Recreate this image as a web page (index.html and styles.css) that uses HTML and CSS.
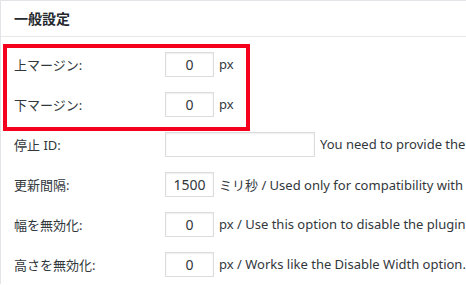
FILE: index.html
```html
<!DOCTYPE html>
<html lang="ja">
<head>
    <meta charset="UTF-8">
    <meta name="viewport" content="width=device-width, initial-scale=1.0">
    <title>一般設定</title>
    <link rel="stylesheet" href="styles.css">
</head>
<body>

    <div class="postbox">
        <h3 class="hndle">一般設定</h3>

        <div class="inside">
            <div class="highlight">
                <div class="row">
                    <label for="mtop">上マージン:</label>
                    <input type="text" id="mtop" class="small" value="0">
                    <span class="desc">px</span>
                </div>
                <div class="row">
                    <label for="mbottom">下マージン:</label>
                    <input type="text" id="mbottom" class="small" value="0">
                    <span class="desc">px</span>
                </div>
            </div>

            <div class="row">
                <label for="stopid">停止 ID:</label>
                <input type="text" id="stopid" class="wide" value="">
                <span class="desc">You need to provide the ID of the element</span>
            </div>
            <div class="row">
                <label for="interval">更新間隔:</label>
                <input type="text" id="interval" class="small" value="1500">
                <span class="desc">ミリ秒 / Used only for compatibility with Internet Explorer</span>
            </div>
            <div class="row">
                <label for="dwidth">幅を無効化:</label>
                <input type="text" id="dwidth" class="small" value="0">
                <span class="desc">px / Use this option to disable the plugin on small screens</span>
            </div>
            <div class="row">
                <label for="dheight">高さを無効化:</label>
                <input type="text" id="dheight" class="small" value="0">
                <span class="desc">px / Works like the Disable Width option.</span>
            </div>
        </div>
    </div>

</body>
</html>
```

FILE: styles.css
```css
* {
    margin: 0;
    padding: 0;
    box-sizing: border-box;
}
body {
    font-family: "Noto Sans", "Noto Sans CJK JP", sans-serif;
    font-size: 13px;
    color: #32373c;
    background-color: #fff;
    overflow: hidden;
}
.postbox {
    width: 700px;
    border-top: 1px solid #e2e4e7;
    border-left: 1px solid #e2e4e7;
    background-color: #fff;
}
.hndle {
    height: 36px;
    line-height: 35px;
    padding: 0 13px;
    font-size: 14px;
    font-weight: bold;
    color: #23282d;
    border-bottom: 1px solid #e8e8e8;
}
.inside {
    padding-top: 7px;
}
.highlight {
    position: relative;
}
.highlight::after {
    content: "";
    position: absolute;
    top: 0;
    left: 2px;
    width: 239px;
    height: 79px;
    border: 4px solid #f5001d;
}
.row {
    height: 40px;
    display: flex;
    align-items: center;
    padding-left: 13px;
    white-space: nowrap;
}
.row label {
    width: 151px;
    flex-shrink: 0;
    color: #32373c;
}
.row input {
    height: 25px;
    padding: 0 6px;
    border: 1px solid #dcdcdc;
    box-shadow: inset 0 1px 2px rgba(0, 0, 0, 0.07);
    font-family: "Noto Sans", sans-serif;
    font-size: 14px;
    color: #32373c;
    background-color: #fff;
    flex-shrink: 0;
}
.row input.small {
    width: 49px;
    text-align: center;
}
.row input.wide {
    width: 150px;
}
.desc {
    margin-left: 5px;
    color: #32373c;
}
```
